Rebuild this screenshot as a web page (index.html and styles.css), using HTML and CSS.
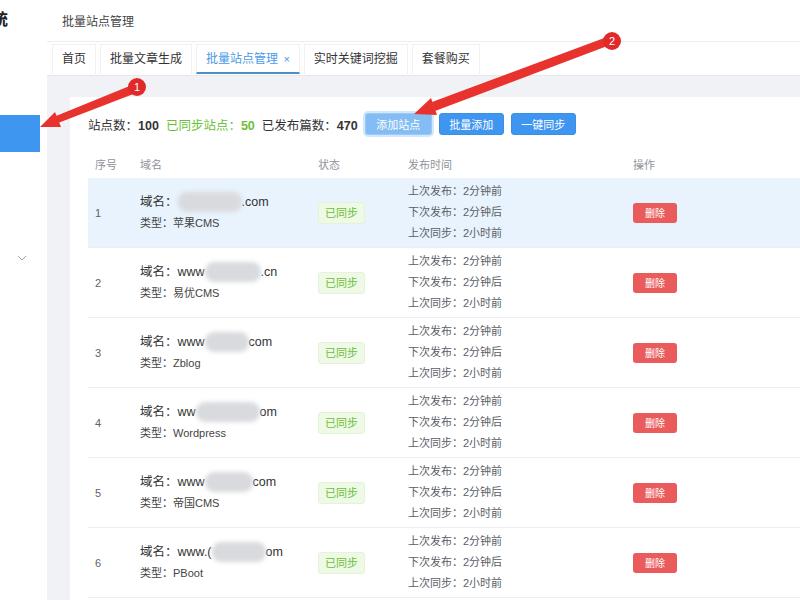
FILE: index.html
```html
<!DOCTYPE html>
<html lang="zh-CN">
<head>
  <meta charset="UTF-8" />
  <title>批量站点管理</title>
  <link rel="stylesheet" href="styles.css">
</head>
<body>
  <div class="app">
    <aside class="sidebar">
      <div class="brand">统</div>
      <div class="menu-item active"></div>
      <div class="menu-arrow">
        <svg width="10" height="6" viewBox="0 0 10 6"><polyline points="1,1 5,5 9,1" fill="none" stroke="#9aa0a8" stroke-width="1"/></svg>
      </div>
    </aside>

    <main class="main">
      <header class="topbar">批量站点管理</header>

      <nav class="tabs">
        <span class="tab">首页</span>
        <span class="tab">批量文章生成</span>
        <span class="tab active">批量站点管理 <em>×</em></span>
        <span class="tab">实时关键词挖掘</span>
        <span class="tab">套餐购买</span>
      </nav>

      <section class="content">
        <div class="card">
          <div class="toolbar">
            <span class="stat">站点数：<b>100</b></span>
            <span class="stat green">已同步站点：<b>50</b></span>
            <span class="stat">已发布篇数：<b>470</b></span>
            <button class="btn focus">添加站点</button>
            <button class="btn">批量添加</button>
            <button class="btn">一键同步</button>
          </div>

          <div class="table">
            <div class="row head">
              <div class="cell">序号</div>
              <div class="cell">域名</div>
              <div class="cell">状态</div>
              <div class="cell">发布时间</div>
              <div class="cell">操作</div>
            </div>

            <div class="row hover">
              <div class="cell">1</div>
              <div class="cell domain">
                <div class="d-name">域名：<span class="blur" style="width:64px"></span>.com</div>
                <div class="d-type">类型：苹果CMS</div>
              </div>
              <div class="cell"><span class="tag">已同步</span></div>
              <div class="cell times"><div>上次发布：2分钟前</div><div>下次发布：2分钟后</div><div>上次同步：2小时前</div></div>
              <div class="cell"><button class="del">删除</button></div>
            </div>

            <div class="row">
              <div class="cell">2</div>
              <div class="cell domain">
                <div class="d-name">域名：www<span class="blur" style="width:56px"></span>.cn</div>
                <div class="d-type">类型：易优CMS</div>
              </div>
              <div class="cell"><span class="tag">已同步</span></div>
              <div class="cell times"><div>上次发布：2分钟前</div><div>下次发布：2分钟后</div><div>上次同步：2小时前</div></div>
              <div class="cell"><button class="del">删除</button></div>
            </div>

            <div class="row">
              <div class="cell">3</div>
              <div class="cell domain">
                <div class="d-name">域名：www<span class="blur" style="width:44px"></span>com</div>
                <div class="d-type">类型：Zblog</div>
              </div>
              <div class="cell"><span class="tag">已同步</span></div>
              <div class="cell times"><div>上次发布：2分钟前</div><div>下次发布：2分钟后</div><div>上次同步：2小时前</div></div>
              <div class="cell"><button class="del">删除</button></div>
            </div>

            <div class="row">
              <div class="cell">4</div>
              <div class="cell domain">
                <div class="d-name">域名：ww<span class="blur" style="width:64px"></span>om</div>
                <div class="d-type">类型：Wordpress</div>
              </div>
              <div class="cell"><span class="tag">已同步</span></div>
              <div class="cell times"><div>上次发布：2分钟前</div><div>下次发布：2分钟后</div><div>上次同步：2小时前</div></div>
              <div class="cell"><button class="del">删除</button></div>
            </div>

            <div class="row">
              <div class="cell">5</div>
              <div class="cell domain">
                <div class="d-name">域名：www<span class="blur" style="width:48px"></span>com</div>
                <div class="d-type">类型：帝国CMS</div>
              </div>
              <div class="cell"><span class="tag">已同步</span></div>
              <div class="cell times"><div>上次发布：2分钟前</div><div>下次发布：2分钟后</div><div>上次同步：2小时前</div></div>
              <div class="cell"><button class="del">删除</button></div>
            </div>

            <div class="row">
              <div class="cell">6</div>
              <div class="cell domain">
                <div class="d-name">域名：www.(<span class="blur" style="width:54px"></span>om</div>
                <div class="d-type">类型：PBoot</div>
              </div>
              <div class="cell"><span class="tag">已同步</span></div>
              <div class="cell times"><div>上次发布：2分钟前</div><div>下次发布：2分钟后</div><div>上次同步：2小时前</div></div>
              <div class="cell"><button class="del">删除</button></div>
            </div>
          </div>
        </div>
      </section>
    </main>
  </div>

  <!-- 标注箭头 -->
  <svg class="marks" width="800" height="600" viewBox="0 0 800 600">
    <polygon points="132,85 136,93 58,123 56,116" fill="#e8322e"/>
    <polygon points="40,127 61,127 55,112" fill="#e8322e"/>
    <circle cx="137" cy="87" r="9" fill="#e02a2a"/>
    <text x="137" y="91" class="mark-num">1</text>

    <polygon points="607,37 610,45 435,111 432,102" fill="#e8322e"/>
    <polygon points="414,114 437,115 431,98" fill="#e8322e"/>
    <circle cx="612" cy="41" r="9" fill="#e02a2a"/>
    <text x="612" y="45" class="mark-num">2</text>
  </svg>
</body>
</html>
```

FILE: styles.css
```css
* {
  box-sizing: border-box;
}

html, body {
  margin: 0;
  width: 800px;
  height: 600px;
  overflow: hidden;
}

body {
  font-family: "Liberation Sans", "Noto Sans CJK SC", sans-serif;
  color: #606266;
  background: #fff;
  position: relative;
}

.app {
  display: flex;
  height: 600px;
}

/* 侧边栏 */
.sidebar {
  width: 47px;
  flex-shrink: 0;
  background: #fff;
  overflow: hidden;
}

.brand {
  margin: 10px 0 0 -8px;
  font-size: 16px;
  font-weight: bold;
  color: #222;
  height: 20px;
  line-height: 20px;
}

.menu-item {
  height: 37px;
  margin: 85px 7px 0 0;
}

.menu-item.active {
  background: #3f96f0;
}

.menu-arrow {
  margin: 95px 0 0 17px;
  height: 10px;
}

/* 主体 */
.main {
  flex: 1;
  background: #f0f2f5;
  display: flex;
  flex-direction: column;
  min-width: 0;
}

.topbar {
  height: 42px;
  padding: 12px 0 0 15px;
  font-size: 12px;
  color: #444;
  background: #fff;
  border-bottom: 1px solid #eceef2;
}

.tabs {
  height: 34px;
  background: #fff;
  display: flex;
  gap: 4px;
  padding: 2px 0 0 5px;
  border-bottom: 1px solid #e6e8ec;
}

.tab {
  height: 30px;
  line-height: 28px;
  padding: 0 9px;
  font-size: 12px;
  color: #333;
  border: 1px solid #eef0f3;
  border-bottom: none;
}

.tab.active {
  color: #4a9ae6;
  border-bottom: 2px solid #4a8fcc;
}

.tab em {
  font-style: normal;
  font-size: 11px;
  margin-left: 2px;
}

.content {
  flex: 1;
  padding: 21px 0 0 23px;
}

.card {
  background: #fff;
  height: 100%;
  padding: 16px 0 0 18px;
  overflow: hidden;
}

.toolbar {
  display: flex;
  align-items: center;
  height: 22px;
  gap: 7px;
}

.stat {
  font-size: 12.5px;
  color: #333;
}

.stat b {
  font-weight: bold;
}

.stat.green {
  color: #6cbf3a;
}

.btn {
  height: 22px;
  width: 65px;
  border: 1px solid #3d8fe6;
  border-radius: 3px;
  background: #3f96f0;
  color: #fff;
  font-family: inherit;
  font-size: 11px;
  padding: 0;
}

.btn.focus {
  width: 67px;
  background: #83bdf3;
  border-color: #9cc9f5;
  box-shadow: 0 0 0 2px #d4e8fb;
}

/* 表格 */
.table {
  margin-top: 15px;
  width: 740px;
}

.row {
  display: grid;
  grid-template-columns: 45px 180px 88px 225px 1fr;
  height: 70px;
  align-items: center;
  border-bottom: 1px solid #ebeef5;
  font-size: 11px;
}

.row.head {
  height: 28px;
  color: #8f9399;
  border-bottom: none;
}

.row.hover {
  background: #e8f3fd;
}

.cell {
  padding-left: 7px;
}

.cell:nth-child(3) {
  padding-left: 5px;
}

.d-name {
  font-size: 12.5px;
  color: #333;
  line-height: 21px;
  display: flex;
  align-items: center;
}

.d-type {
  font-size: 11px;
  color: #444;
  line-height: 21px;
}

.blur {
  display: inline-block;
  height: 20px;
  background: #d9dade;
  border-radius: 9px;
  filter: blur(2px);
}

.times div {
  line-height: 21px;
  color: #5a5e66;
}

.tag {
  display: inline-block;
  width: 47px;
  height: 22px;
  line-height: 20px;
  text-align: center;
  background: #eef9e6;
  border: 1px solid #e2f3d6;
  border-radius: 3px;
  color: #6cbf3a;
  font-size: 11px;
}

.del {
  width: 44px;
  height: 20px;
  border: none;
  border-radius: 3px;
  background: #ea5c5c;
  color: #fff;
  font-family: inherit;
  font-size: 10px;
  padding: 0;
}

/* 标注 */
.marks {
  position: absolute;
  left: 0;
  top: 0;
  pointer-events: none;
}

.mark-num {
  fill: #fff;
  font-size: 11px;
  text-anchor: middle;
  font-family: "Liberation Sans", sans-serif;
}
```
